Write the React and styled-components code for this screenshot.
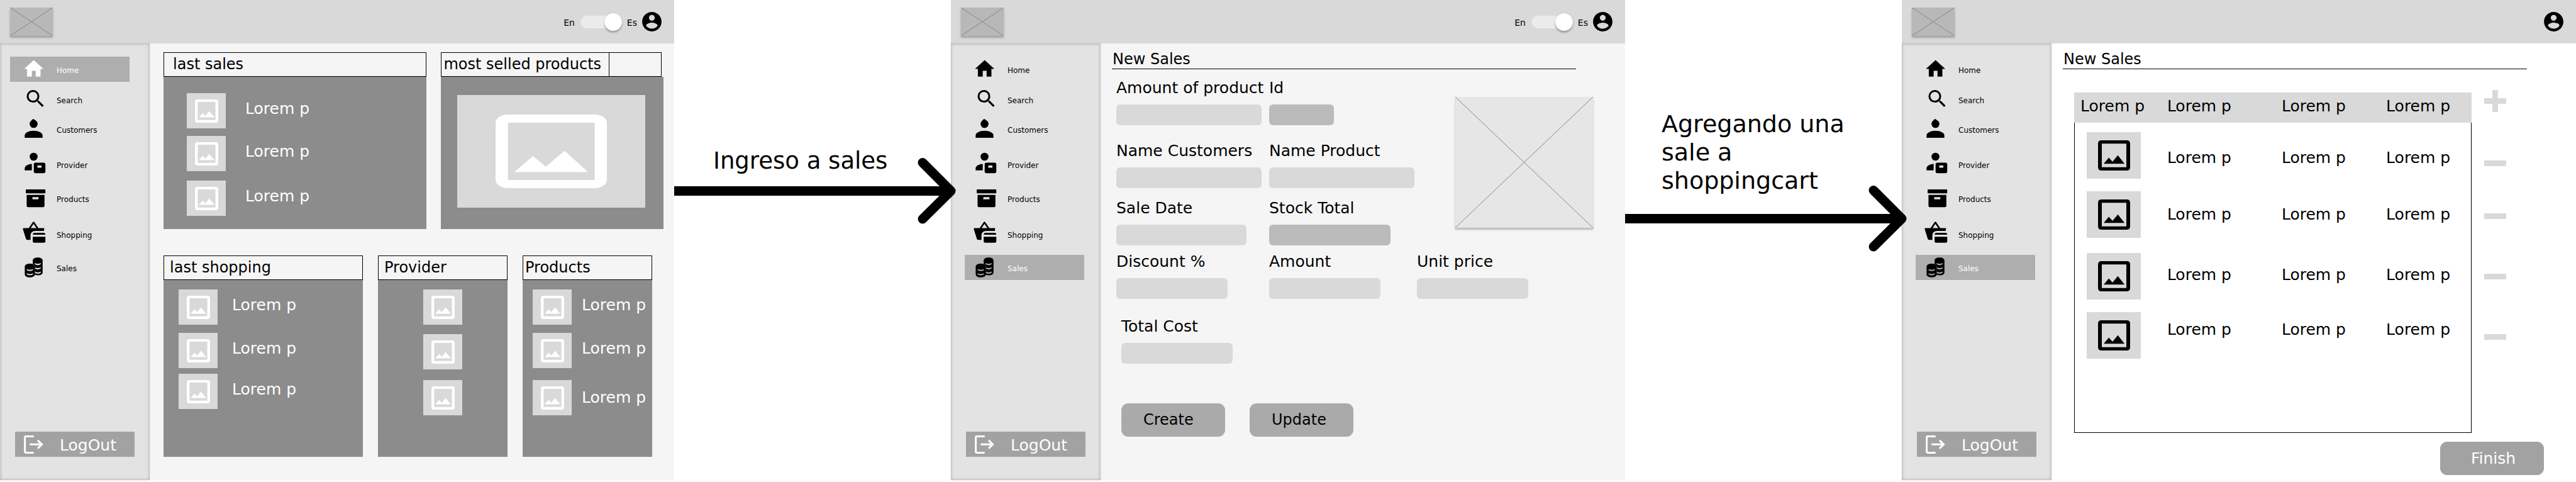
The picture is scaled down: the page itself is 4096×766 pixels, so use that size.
import React from 'react';
import styled, { createGlobalStyle } from 'styled-components';

const GlobalStyle = createGlobalStyle`
  *, *::before, *::after { box-sizing: border-box; }
  body { margin: 0; background: #fff; }
  body, button, input { font-family: "DejaVu Sans", Inter, sans-serif; color: #000; }
  h1, h2, p, ul { margin: 0; padding: 0; font-weight: 400; }
  svg { display: block; flex: none; }
`;

/* ---------- board ---------- */

const Board = styled.div`
  display: grid;
  grid-template-columns: 1072fr 440fr 1072fr 440fr 1072fr;
  min-height: 100vh;
  padding-bottom: 3px;
`;

const Screen = styled.section`
  display: grid;
  grid-template-columns: 238px minmax(0, 1fr);
  grid-template-rows: 69px 1fr;
  background: ${(p) => p.$background || '#f5f5f5'};
`;

const Transition = styled.div`
  position: relative;
  z-index: 1;
  padding-top: ${(p) => p.$top}px;
`;

const TransitionText = styled.p`
  padding: 0 56px 0 ${(p) => p.$left}px;
  margin-bottom: ${(p) => p.$gap}px;
  font-size: ${(p) => p.$size}px;
  line-height: 45px;
`;

const ArrowSvg = styled.svg`
  width: 100%;
  height: 15px;
  overflow: visible;
`;

function Arrow() {
  return (
    <ArrowSvg viewBox="0 0 440 15" preserveAspectRatio="xMaxYMid" aria-hidden="true">
      <path d="M0 7.5H440" fill="none" stroke="#000" strokeWidth="15" />
      <path
        d="M395 -37.5L440 7.5L395 52"
        fill="none"
        stroke="#000"
        strokeWidth="15"
        strokeLinecap="round"
        strokeLinejoin="round"
      />
    </ArrowSvg>
  );
}

/* ---------- top bar ---------- */

const TopBar = styled.header`
  grid-column: 1 / -1;
  display: flex;
  align-items: center;
  padding: 0 17px 0 16px;
  background: #d9d9d9;
`;

const Logo = styled.svg`
  width: 68px;
  height: 45px;
  margin-right: auto;
  background: #b8b8b8;
  box-shadow: 0 3px 3px rgba(0, 0, 0, 0.25);
`;

const LanguageLabel = styled.label`
  padding-top: 3px;
  font-size: 14px;
  line-height: 18px;
`;

const Switch = styled.input`
  appearance: none;
  display: flex;
  align-items: center;
  justify-content: flex-end;
  width: 60px;
  height: 20px;
  margin: 0 14px 0 9px;
  border-radius: 10px;
  background: #ebebeb;

  &::before {
    content: '';
    flex: none;
    width: 28px;
    height: 28px;
    margin-right: -6px;
    border-radius: 50%;
    background: #fff;
    box-shadow: 0 3px 3px rgba(0, 0, 0, 0.25), 0 0 1px rgba(0, 0, 0, 0.3);
  }
`;

const AccountButton = styled.button`
  padding: 0;
  margin-left: 5px;
  border: 0;
  background: none;
`;

function Header({ id, language }) {
  return (
    <TopBar>
      <Logo viewBox="0 0 68 45" preserveAspectRatio="none" role="img" aria-label="Logo">
        <path d="M0 0L68 45M68 0L0 45" stroke="#868686" strokeWidth="1" />
      </Logo>
      {language && (
        <>
          <LanguageLabel htmlFor={id}>En</LanguageLabel>
          <Switch id={id} type="checkbox" role="switch" defaultChecked />
          <LanguageLabel htmlFor={id}>Es</LanguageLabel>
        </>
      )}
      <AccountButton type="button" aria-label="Account">
        <svg width="37" height="37" viewBox="0 0 24 24">
          <path d="M12 2C6.48 2 2 6.48 2 12s4.48 10 10 10 10-4.48 10-10S17.52 2 12 2zm0 3c1.66 0 3 1.34 3 3s-1.34 3-3 3-3-1.34-3-3 1.34-3 3-3zm0 14.2c-2.5 0-4.71-1.28-6-3.22.03-1.99 4-3.08 6-3.08 1.99 0 5.97 1.09 6 3.08-1.29 1.94-3.5 3.22-6 3.22z" />
        </svg>
      </AccountButton>
    </TopBar>
  );
}

/* ---------- side bar ---------- */

const SideBar = styled.aside`
  display: flex;
  flex-direction: column;
  padding: 21px 24px 37px 16px;
  background: #e3e3e3;
  box-shadow: inset 0 0 4px 1px rgba(0, 0, 0, 0.2), 0 0 2px rgba(0, 0, 0, 0.12);
`;

const NavList = styled.ul`
  display: grid;
  grid-template-rows: 48px 47px 56px 54px 57px 53px 40px;
  list-style: none;
`;

const NavItem = styled.li`
  height: 40px;
  width: 190px;
  margin-left: ${(p) => (p.$shifted ? 6 : 0)}px;
  padding-left: ${(p) => (p.$shifted ? 13 : 19)}px;
  background: ${(p) => (p.$active ? '#aeaeae' : 'none')};
`;

const NavLink = styled.a`
  display: flex;
  gap: 15px;
  height: 100%;
  color: ${(p) => (p.$active ? '#fff' : '#000')};
  font-size: 12px;
  line-height: 16px;
  text-decoration: none;

  span { padding-top: 14px; }
`;

const LogOut = styled.button`
  display: flex;
  align-items: center;
  gap: 26px;
  width: 190px;
  height: 40px;
  margin-top: auto;
  margin-left: 8px;
  padding: 0 0 0 14px;
  border: 0;
  background: #a2a2a2;
  color: #fff;
  font-size: 25px;
  line-height: 29px;

  span { padding-top: 3px; }
`;

const icons = {
  Home: (
    <path transform="translate(0.2 1) scale(1.54)" d="M10 20v-6h4v6h5v-8h3L12 3 2 12h3v8z" />
  ),
  Search: (
    <path
      transform="translate(2.8 0.3) scale(1.55)"
      d="M15.5 14h-.79l-.28-.27A6.471 6.471 0 0 0 16 9.5 6.5 6.5 0 1 0 9.5 16c1.61 0 3.09-.59 4.23-1.57l.27.28v.79l5 4.99L20.49 19l-4.99-5zm-6 0C7.01 14 5 11.99 5 9.5S7.01 5 9.5 5 14 7.01 14 9.5 11.99 14 9.5 14z"
    />
  ),
  Customers: (
    <>
      <circle cx="18.5" cy="12" r="6.3" />
      <path d="M13.5 9Q16 4.2 18.2 4L20.2 5.6L22.5 7.5z" />
      <path d="M4.3 34V30.5C4.3 26 11 22.8 18.5 22.8S32.7 26 32.7 30.5V34z" />
    </>
  ),
  Provider: (
    <>
      <circle cx="18.5" cy="8" r="6.3" />
      <path d="M4.3 29.8V26.4C4.3 22.6 9 20 15.6 19.4V29.8z" />
      <path
        fillRule="evenodd"
        d="M21.5 17.4H34.4Q37.2 17.4 37.2 20.2V31.5Q37.2 34.3 34.4 34.3H21.5Q18.7 34.3 18.7 31.5V20.2Q18.7 17.4 21.5 17.4zM24.5 22.1V25.4H31V22.1z"
      />
    </>
  ),
  Products: (
    <>
      <rect x="6" y="6.1" width="31.2" height="6.2" rx="1" />
      <path
        fillRule="evenodd"
        d="M7.4 14.8H35.8V31.7Q35.8 34.2 33.3 34.2H9.9Q7.4 34.2 7.4 31.7zM16.6 18.3V21.8H26.2V18.3z"
      />
    </>
  ),
  Shopping: (
    <>
      <path d="M11.6 11.5L18.4 1.6L25.2 11.5" fill="none" stroke="currentColor" strokeWidth="2.6" strokeLinejoin="round" />
      <path d="M2.2 10.5H34.6Q35.5 10.5 35.4 11.5L34.8 14.9H21.5Q13.8 14.9 13.6 22V29.3H8.5Q6.7 29.3 6.2 27.5L1.4 12Q1.2 10.5 2.2 10.5z" />
      <path d="M17.1 21.1Q17.1 18.1 20.1 18.1H34.2Q37.2 18.1 37.2 21.1z" />
      <path d="M17.1 24.3H37.2V31.2Q37.2 33.7 34.7 33.7H19.6Q17.1 33.7 17.1 31.2z" />
    </>
  ),
  Sales: (
    <>
      <path
        fillRule="evenodd"
        d="M17.1 9.3C17.1 6 20.5 4.3 25 4.3S32.8 6 32.8 9.3V27.8C32.8 31 29.5 32.6 25 32.6Q22.6 32.6 20.6 31.8V18.8Q20.6 15.5 17.1 14.4zM20.4 13Q25 15.6 29.8 13V14.8Q25 18 20.4 14.8zM20.4 19.8Q25 22.4 29.8 19.8V21.6Q25 24.8 20.4 21.6zM20.4 26.6Q25 29.4 29.8 26.6V28.4Q25 31.4 20.4 28.4z"
      />
      <path
        fillRule="evenodd"
        d="M4.4 19C4.4 15.7 7.8 14 12.5 14S20.6 15.7 20.6 19V30.8C20.6 34.1 17.2 35.8 12.5 35.8S4.4 34.1 4.4 30.8zM7.6 22.4Q12.5 25 17.4 22.4V24.2Q12.5 27.3 7.6 24.2zM7.6 29.2Q12.5 31.8 17.4 29.2V31Q12.5 34.2 7.6 31z"
      />
    </>
  ),
};

function Navigation({ active }) {
  return (
    <SideBar>
      <nav>
        <NavList>
          {Object.entries(icons).map(([name, drawing]) => {
            const isActive = name === active;
            return (
              <NavItem key={name} $active={isActive} $shifted={isActive && name === 'Sales'}>
                <NavLink href={`#${name.toLowerCase()}`} $active={isActive}>
                  <svg
                    width="40"
                    height="40"
                    viewBox="0 0 40 40"
                    color={isActive && name === 'Home' ? '#fff' : '#000'}
                    fill="currentColor"
                    aria-hidden="true"
                  >
                    {drawing}
                  </svg>
                  <span>{name}</span>
                </NavLink>
              </NavItem>
            );
          })}
        </NavList>
      </nav>
      <LogOut type="button">
        <svg width="31" height="29" viewBox="0 0 31 29" fill="none" stroke="#fff" aria-hidden="true">
          <path d="M15.7 1.4H3.4Q1.6 1.4 1.6 3.2V25.6Q1.6 27.4 3.4 27.4H15.7" strokeWidth="3" />
          <path d="M9.2 14.2H29" strokeWidth="3" />
          <path d="M22 7.8L28.6 14.2L22 20.6" strokeWidth="3" />
        </svg>
        <span>LogOut</span>
      </LogOut>
    </SideBar>
  );
}

/* ---------- image tiles ---------- */

const TileBox = styled.div`
  display: flex;
  flex: none;
  align-items: center;
  justify-content: center;
  width: ${(p) => p.$width}px;
  height: ${(p) => p.$height}px;
  background: #d9d9d9;
`;

function Tile() {
  return (
    <TileBox $width={62} $height={56}>
      <svg width="37" height="37" viewBox="0 0 37 37" fill="#fff" role="img" aria-label="Picture">
        <path
          fillRule="evenodd"
          d="M4 0H33Q37 0 37 4V33Q37 37 33 37H4Q0 37 0 33V4Q0 0 4 0zM4.4 4.1V32.8H32.6V4.1z"
        />
        <path d="M6 28.4L12.2 21.6L16.5 26L22.5 18.4L31 28.4z" />
      </svg>
    </TileBox>
  );
}

function DarkTile() {
  return (
    <TileBox $width={86} $height={74}>
      <svg width="51" height="48" viewBox="0 0 51 48" role="img" aria-label="Picture">
        <path
          fillRule="evenodd"
          d="M5.5 0H45.5Q51 0 51 5V43Q51 48 45.5 48H5.5Q0 48 0 43V5Q0 0 5.5 0zM6 5.2V42.8H45V5.2z"
        />
        <path d="M9 37.2L17.2 27.4L23 34L31.5 23.7L42.2 37.2z" />
      </svg>
    </TileBox>
  );
}

/* ---------- dashboard ---------- */

const Dashboard = styled.main`
  display: flex;
  flex-direction: column;
  gap: 42px;
  padding: 14px 17px 37px 22px;
`;

const CardRow = styled.div`
  display: grid;
  grid-template-columns: ${(p) => p.$columns};
  gap: ${(p) => p.$gap}px;
  padding-right: ${(p) => p.$right || 0}px;
`;

const Card = styled.section`
  display: flex;
  flex-direction: column;
`;

const CardHead = styled.div`
  display: flex;
  height: 39px;
  margin-right: ${(p) => p.$right || 0}px;
  border: 1px solid #000;
`;

const CardTitle = styled.h2`
  flex: ${(p) => p.$width ? `0 0 ${p.$width}` : '1'};
  padding: 4px 0 4px ${(p) => p.$left}px;
  border-right: ${(p) => (p.$width ? '1px solid #000' : '0')};
  font-size: 24px;
  line-height: 29px;
  white-space: nowrap;
`;

const CardBody = styled.div`
  height: ${(p) => p.$height}px;
  padding: ${(p) => p.$top}px 0 0 ${(p) => p.$left}px;
  background: #8c8c8c;
`;

const ItemList = styled.ul`
  display: grid;
  grid-template-rows: ${(p) => p.$rows};
  justify-content: ${(p) => (p.$centered ? 'center' : 'start')};
  list-style: none;
`;

const Item = styled.li`
  display: flex;
  gap: ${(p) => p.$gap || 0}px;
  height: 56px;
  color: #fff;
  font-size: 25px;
  line-height: 29px;
  white-space: nowrap;

  span { padding-top: ${(p) => (p.$low ? 13 : 10)}px; }
`;

const Feature = styled.div`
  display: flex;
  align-items: center;
  justify-content: center;
  height: 179px;
  margin-right: 29px;
  background: #d9d9d9;
`;

function DashboardScreen() {
  return (
    <Screen>
      <Header id="language-home" language />
      <Navigation active="Home" />
      <Dashboard>
        <CardRow $columns="419fr 354fr" $gap={23}>
          <Card>
            <CardHead><CardTitle $left={14}>last sales</CardTitle></CardHead>
            <CardBody $height={242} $top={26} $left={37}>
              <ItemList $rows="68px 71px 56px">
                {[0, 1, 2].map((i) => (
                  <Item key={i} $gap={31}><Tile /><span>Lorem p</span></Item>
                ))}
              </ItemList>
            </CardBody>
          </Card>
          <Card>
            <CardHead $right={3}><CardTitle $left={3} $width="267px">most selled products</CardTitle></CardHead>
            <CardBody $height={242} $top={29} $left={26}>
              <Feature>
                <svg width="177" height="117" viewBox="0 0 177 117" fill="#fff" role="img" aria-label="Most selled product">
                  <path
                    fillRule="evenodd"
                    d="M19.5 0H157.5C168 0 177 5.5 177 13V104C177 111.5 168 117 157.5 117H19.5C9 117 0 111.5 0 104V13C0 5.5 9 0 19.5 0zM19.8 12.9V104H157.6V12.9z"
                  />
                  <path d="M29.8 91.4L59.2 66L80 82.7L109.8 57.6L147 91.4z" />
                </svg>
              </Feature>
            </CardBody>
          </Card>
        </CardRow>
        <CardRow $columns="317fr 206fr 206fr" $gap={24} $right={18}>
          <Card>
            <CardHead><CardTitle $left={9}>last shopping</CardTitle></CardHead>
            <CardBody $height={281} $top={15} $left={24}>
              <ItemList $rows="69px 65px 56px">
                {[0, 1, 2].map((i) => (
                  <Item key={i} $gap={23}><Tile /><span>Lorem p</span></Item>
                ))}
              </ItemList>
            </CardBody>
          </Card>
          <Card>
            <CardHead><CardTitle $left={9}>Provider</CardTitle></CardHead>
            <CardBody $height={281} $top={15} $left={0}>
              <ItemList $rows="71px 73px 56px" $centered>
                {[0, 1, 2].map((i) => <Item key={i}><Tile /></Item>)}
              </ItemList>
            </CardBody>
          </Card>
          <Card>
            <CardHead><CardTitle $left={3}>Products</CardTitle></CardHead>
            <CardBody $height={281} $top={15} $left={16}>
              <ItemList $rows="69px 75px 56px">
                {[0, 1, 2].map((i) => (
                  <Item key={i} $gap={16} $low={i === 2}><Tile /><span>Lorem p</span></Item>
                ))}
              </ItemList>
            </CardBody>
          </Card>
        </CardRow>
      </Dashboard>
    </Screen>
  );
}

/* ---------- sale form ---------- */

const Page = styled.main`
  display: flex;
  flex-direction: column;
  padding: 11px 51px 8px 18px;
`;

const PageTitle = styled.h1`
  margin-right: 27px;
  padding-left: 1px;
  border-bottom: 1px solid #000;
  font-size: 24px;
  line-height: 29px;
`;

const FormGrid = styled.div`
  display: grid;
  grid-template-columns: 243fr 235fr 61fr 219fr;
  grid-template-rows: 100px 91px 85px 74px;
  margin: 15px 0 0 7px;
`;

const FieldBox = styled.div`
  display: flex;
  flex-direction: column;
  gap: 12px;
  grid-column: ${(p) => p.$column || 'auto'};
  grid-row: ${(p) => p.$row || 'auto'};

  label {
    font-size: 25px;
    line-height: 29px;
    white-space: nowrap;
  }
`;

const TextInput = styled.input`
  width: ${(p) => p.$width}px;
  height: 33px;
  padding: 0 10px;
  border: 0;
  border-radius: 6px;
  background: ${(p) => (p.readOnly ? '#bbb' : '#d9d9d9')};
  font-size: 18px;
`;

const Photo = styled.svg`
  grid-column: 4;
  grid-row: 1 / 4;
  width: 100%;
  height: 208px;
  margin-top: 29px;
  background: #e6e6e6;
  box-shadow: 0 3px 3px rgba(0, 0, 0, 0.25);
`;

const FormFoot = styled.div`
  display: flex;
  flex-direction: column;
  gap: 63px;
  padding: 29px 0 0 15px;
`;

const ButtonRow = styled.div`
  display: flex;
  gap: 39px;
`;

const Action = styled.button`
  width: 165px;
  height: 53px;
  padding: 0 0 0 35px;
  border: 0;
  border-radius: 11px;
  background: #aaa;
  font-size: 24px;
  line-height: 29px;
  text-align: left;
`;

const FinishAction = styled(Action)`
  align-self: flex-end;
  margin-top: 14px;
  padding: 0 0 0 4px;
  background: #a2a2a2;
  color: #fff;
  font-size: 25px;
  text-align: center;
`;

const fields = [
  { label: 'Amount of product', width: 231, column: 1, row: 1 },
  { label: 'Id', width: 103, column: 2, row: 1, locked: true },
  { label: 'Name Customers', width: 231, column: 1, row: 2 },
  { label: 'Name Product', width: 231, column: 2, row: 2 },
  { label: 'Sale Date', width: 207, column: 1, row: 3 },
  { label: 'Stock Total', width: 193, column: 2, row: 3, locked: true },
  { label: 'Discount %', width: 177, column: 1, row: 4 },
  { label: 'Amount', width: 177, column: 2, row: 4 },
  { label: 'Unit price', width: 177, column: '3 / 5', row: 4 },
];

function Field({ label, width, column, row, locked }) {
  const id = `field-${label.toLowerCase().replace(/[^a-z]+/g, '-')}`;
  return (
    <FieldBox $column={column} $row={row}>
      <label htmlFor={id}>{label}</label>
      <TextInput id={id} type="text" $width={width} readOnly={locked} />
    </FieldBox>
  );
}

function SaleFormScreen() {
  return (
    <Screen>
      <Header id="language-sales" language />
      <Navigation active="Sales" />
      <Page>
        <PageTitle>New Sales</PageTitle>
        <FormGrid>
          {fields.map((field) => <Field key={field.label} {...field} />)}
          <Photo viewBox="0 0 219 208" preserveAspectRatio="none" role="img" aria-label="Product picture">
            <path d="M0 0L219 208M219 0L0 208" stroke="#868686" strokeWidth="1" />
          </Photo>
        </FormGrid>
        <FormFoot>
          <Field label="Total Cost" width={177} />
          <ButtonRow>
            <Action type="button">Create</Action>
            <Action type="button">Update</Action>
          </ButtonRow>
        </FormFoot>
      </Page>
    </Screen>
  );
}

/* ---------- shopping cart ---------- */

const Cart = styled.div`
  display: grid;
  grid-template-columns: minmax(0, 1fr) 35px;
  gap: 20px;
  margin: 33px 60px 0 18px;
`;

const CartTable = styled.table`
  width: 100%;
  margin-top: 4px;
  border-spacing: 0;
  table-layout: fixed;
  font-size: 25px;
  line-height: 29px;

  th, td {
    padding: 0;
    font-weight: 400;
    text-align: left;
    vertical-align: top;
  }

  th {
    height: 48px;
    padding-top: 7px;
    background: #d9d9d9;
  }

  th:first-child { padding-left: 10px; }
  td:first-child { padding: 15px 0 0 19px; border-left: 1px solid #000; }
  td:last-child { border-right: 1px solid #000; }
  tr:last-child td { border-bottom: 1px solid #000; }
`;

const Column = styled.col`
  width: ${(p) => p.$share}%;
`;

const CartRow = styled.tr`
  height: ${(p) => p.$height}px;

  td + td { padding-top: ${(p) => p.$textTop}px; }
`;

const Steps = styled.div`
  display: grid;
  grid-template-rows: 99px 84px 96px 96px 35px;
`;

const StepButton = styled.button`
  width: 35px;
  height: 35px;
  padding: 0;
  border: 0;
  background: none;
`;

const cartRows = [
  { height: 94, textTop: 41 },
  { height: 98, textTop: 37 },
  { height: 94, textTop: 35 },
  { height: 207, textTop: 28 },
];

function CartScreen() {
  return (
    <Screen $background="#fff">
      <Header />
      <Navigation active="Sales" />
      <Page>
        <PageTitle>New Sales</PageTitle>
        <Cart>
          <CartTable>
            <colgroup>
              {[23.4, 28.8, 26.3, 21.5].map((share) => <Column key={share} $share={share} />)}
            </colgroup>
            <thead>
              <tr>
                {[0, 1, 2, 3].map((i) => <th key={i} scope="col">Lorem p</th>)}
              </tr>
            </thead>
            <tbody>
              {cartRows.map((row, i) => (
                <CartRow key={i} $height={row.height} $textTop={row.textTop}>
                  <td><DarkTile /></td>
                  <td>Lorem p</td>
                  <td>Lorem p</td>
                  <td>Lorem p</td>
                </CartRow>
              ))}
            </tbody>
          </CartTable>
          <Steps>
            {['Add', 'Remove first', 'Remove second', 'Remove third', 'Remove fourth'].map((name, i) => (
              <StepButton key={name} type="button" aria-label={name}>
                <svg width="35" height="35" viewBox="0 0 35 35" fill="#d9d9d9">
                  <path d={i === 0 ? 'M13 0H22V13H35V22H22V35H13V22H0V13H13z' : 'M0 13H35V22H0z'} />
                </svg>
              </StepButton>
            ))}
          </Steps>
        </Cart>
        <FinishAction type="button">Finish</FinishAction>
      </Page>
    </Screen>
  );
}

export default function App() {
  return (
    <>
      <GlobalStyle />
      <Board>
        <DashboardScreen />
        <Transition $top={233}>
          <TransitionText $left={62} $gap={18} $size={37}>Ingreso a sales</TransitionText>
          <Arrow />
        </Transition>
        <SaleFormScreen />
        <Transition $top={175}>
          <TransitionText $left={58} $gap={30} $size={38}>Agregando una sale a shoppingcart</TransitionText>
          <Arrow />
        </Transition>
        <CartScreen />
      </Board>
    </>
  );
}
